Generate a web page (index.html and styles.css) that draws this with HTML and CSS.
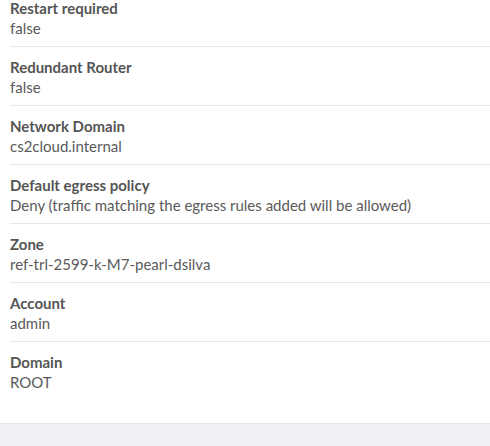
FILE: index.html
```html
<!DOCTYPE html>
<html>
<head>
<meta charset="utf-8">
<link rel="stylesheet" href="styles.css">
</head>
<body>
<div class="panel">
  <ul class="details">
    <li class="item"><div class="label">Restart required</div><div class="value">false</div></li>
    <li class="item"><div class="label">Redundant Router</div><div class="value">false</div></li>
    <li class="item"><div class="label">Network Domain</div><div class="value">cs2cloud.internal</div></li>
    <li class="item"><div class="label">Default egress policy</div><div class="value">Deny (traffic matching the egress rules added will be allowed)</div></li>
    <li class="item"><div class="label">Zone</div><div class="value">ref-trl-2599-k-M7-pearl-dsilva</div></li>
    <li class="item"><div class="label">Account</div><div class="value">admin</div></li>
    <li class="item last"><div class="label">Domain</div><div class="value">ROOT</div></li>
  </ul>
</div>
<div class="footer"></div>
</body>
</html>
```
FILE: styles.css
```css
html, body {
  margin: 0;
  padding: 0;
  background: #fff;
}
body {
  font-family: Lato, "Liberation Sans", sans-serif;
  font-size: 15px;
  line-height: 20px;
  width: 490px;
  height: 446px;
  display: flex;
  flex-direction: column;
  overflow: hidden;
}
.panel {
  flex: 1;
  padding-left: 10px;
}
.details {
  list-style: none;
  margin: 0;
  padding: 0;
}
.item {
  padding: 10px 0 8px;
  border-bottom: 1px solid #e8e8e8;
}
.item:first-child {
  padding-top: 0;
  margin-top: -2px;
}
.item.last {
  border-bottom: none;
}
.label {
  font-weight: 700;
  color: #555;
}
.value {
  color: #5a5a5a;
}
.footer {
  height: 22px;
  background: #f0f1f4;
  border-top: 1px solid #e6e6e6;
}
```
